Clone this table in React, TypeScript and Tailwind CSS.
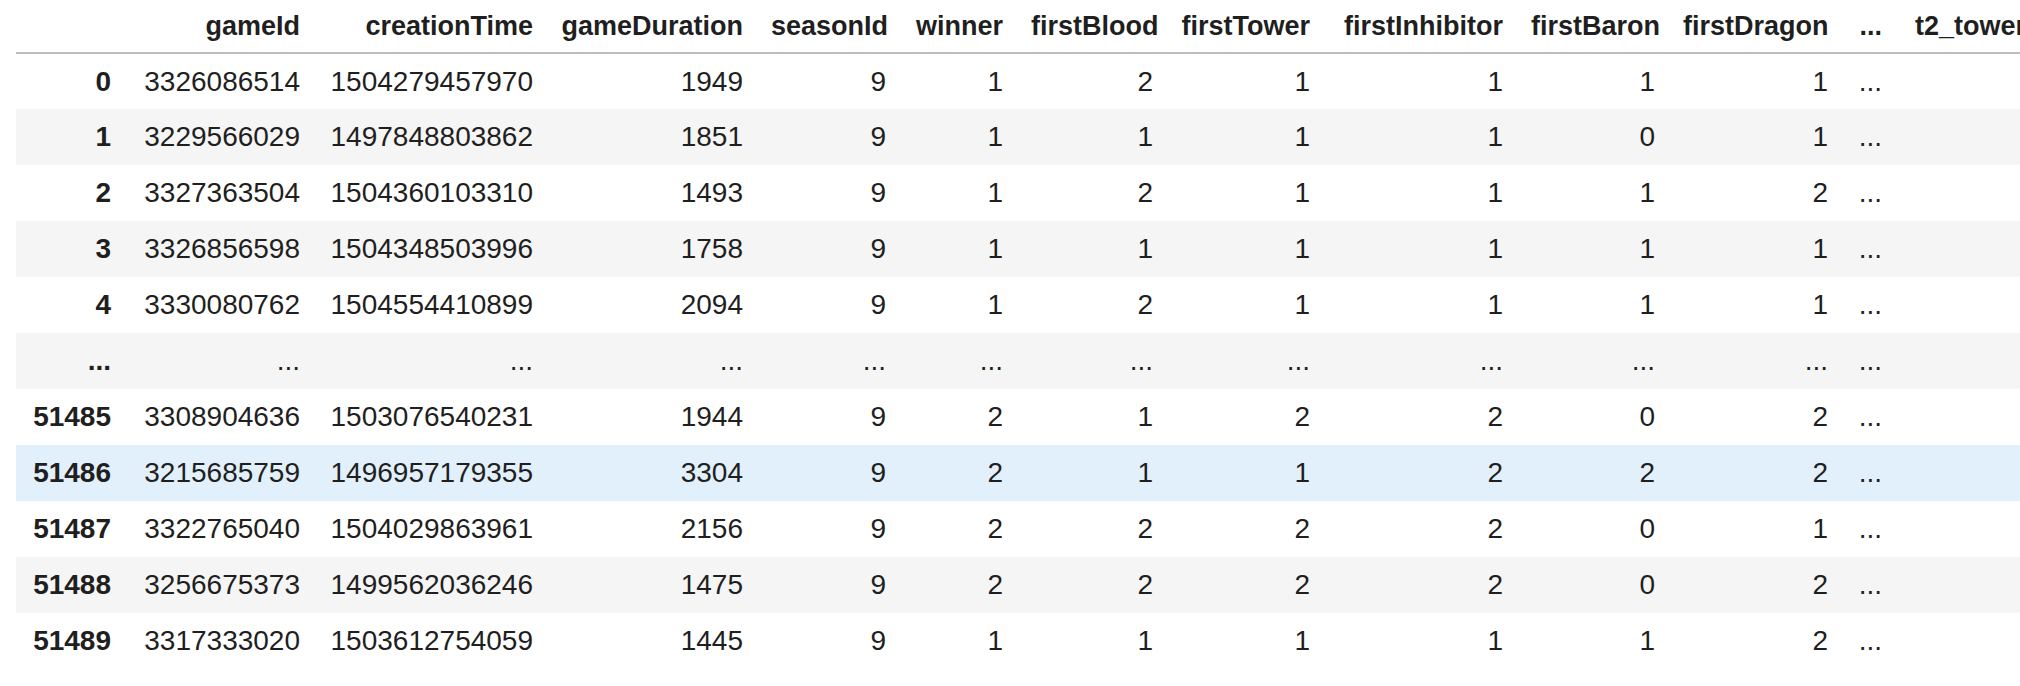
import React from "react";

const columns = [
  { name: "gameId", width: 189 },
  { name: "creationTime", width: 233 },
  { name: "gameDuration", width: 210 },
  { name: "seasonId", width: 143 },
  { name: "winner", width: 117 },
  { name: "firstBlood", width: 150 },
  { name: "firstTower", width: 157 },
  { name: "firstInhibitor", width: 193 },
  { name: "firstBaron", width: 152 },
  { name: "firstDragon", width: 173 },
  { name: "...", width: 54 },
  { name: "t2_towerKills", width: 201 },
];

type Row = { index: string; values: string[] };

const E = "...";

const rows: Row[] = [
  { index: "0", values: ["3326086514", "1504279457970", "1949", "9", "1", "2", "1", "1", "1", "1", E, "5"] },
  { index: "1", values: ["3229566029", "1497848803862", "1851", "9", "1", "1", "1", "1", "0", "1", E, "2"] },
  { index: "2", values: ["3327363504", "1504360103310", "1493", "9", "1", "2", "1", "1", "1", "2", E, "2"] },
  { index: "3", values: ["3326856598", "1504348503996", "1758", "9", "1", "1", "1", "1", "1", "1", E, "0"] },
  { index: "4", values: ["3330080762", "1504554410899", "2094", "9", "1", "2", "1", "1", "1", "1", E, "3"] },
  { index: E, values: [E, E, E, E, E, E, E, E, E, E, E, E] },
  { index: "51485", values: ["3308904636", "1503076540231", "1944", "9", "2", "1", "2", "2", "0", "2", E, "10"] },
  { index: "51486", values: ["3215685759", "1496957179355", "3304", "9", "2", "1", "1", "2", "2", "2", E, "11"] },
  { index: "51487", values: ["3322765040", "1504029863961", "2156", "9", "2", "2", "2", "2", "0", "1", E, "10"] },
  { index: "51488", values: ["3256675373", "1499562036246", "1475", "9", "2", "2", "2", "2", "0", "2", E, "11"] },
  { index: "51489", values: ["3317333020", "1503612754059", "1445", "9", "1", "1", "1", "1", "1", "2", E, "5"] },
];

// row 51486 is the hovered one in the notebook
const hoverRow = 7;

export default function App() {
  return (
    <div className="w-full h-[686px] overflow-hidden bg-white pl-[16px] text-[#1f1f1f] font-['Liberation_Sans',Arial,sans-serif] text-[28px]">
      <table className="w-[2081px] table-fixed border-collapse">
        <colgroup>
          <col className="w-[109px]" />
          {columns.map((c) => (
            <col key={c.name} style={{ width: c.width }} />
          ))}
        </colgroup>
        <thead>
          <tr className="h-[53px] border-b-2 border-[#bdbdbd]">
            <th className="px-[14px]" />
            {columns.map((c) => (
              <th key={c.name} className="px-[14px] text-right text-[27px] font-bold whitespace-nowrap">
                {c.name}
              </th>
            ))}
          </tr>
        </thead>
        <tbody>
          {rows.map((r, i) => {
            const bg = i === hoverRow ? "bg-[#e2f0fb]" : i % 2 === 1 ? "bg-[#f5f5f5]" : "bg-white";
            return (
              <tr key={r.index + i} className={`h-[56px] ${bg}`}>
                <th className="px-[14px] text-right font-bold whitespace-nowrap">{r.index}</th>
                {r.values.map((v, j) => (
                  <td key={j} className="px-[14px] text-right whitespace-nowrap">
                    {v}
                  </td>
                ))}
              </tr>
            );
          })}
        </tbody>
      </table>
    </div>
  );
}
